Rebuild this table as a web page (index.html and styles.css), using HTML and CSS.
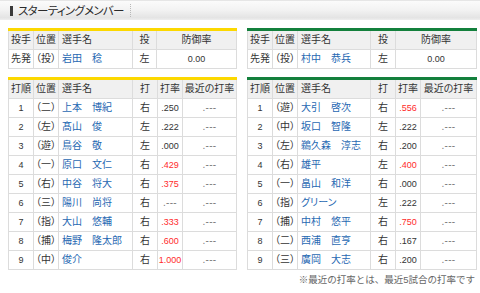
FILE: index.html
```html
<!DOCTYPE html>
<html lang="ja">
<head>
<meta charset="utf-8">
<title>スターティングメンバー</title>
<link rel="stylesheet" href="styles.css">
</head>
<body>
<div class="titlebar">
  <span class="mark"></span>
  <span class="title">スターティングメンバー</span>
  <span class="sep"></span>
</div>
<div class="teams">
  <div class="team home">
    <div class="bar"></div>
    <table class="tbl">
      <tr class="head"><th class="w25">投手</th><th class="w25">位置</th><th class="w74 l">選手名</th><th class="w24">投</th><th>防御率</th></tr>
      <tr><td>先発</td><td>（投）</td><td class="name">岩田　稔</td><td>左</td><td class="num">0.00</td></tr>
    </table>
    <div class="bar gap"></div>
    <table class="tbl">
      <tr class="head"><th class="w25">打順</th><th class="w25">位置</th><th class="w74 l">選手名</th><th class="w25">打</th><th class="w25">打率</th><th>最近の打率</th></tr>
      <tr><td class="num">1</td><td>（二）</td><td class="name">上本　博紀</td><td>右</td><td class="num">.250</td><td class="dash">.---</td></tr>
      <tr><td class="num">2</td><td>（左）</td><td class="name">髙山　俊</td><td>左</td><td class="num">.222</td><td class="dash">.---</td></tr>
      <tr><td class="num">3</td><td>（遊）</td><td class="name">鳥谷　敬</td><td>左</td><td class="num">.000</td><td class="dash">.---</td></tr>
      <tr><td class="num">4</td><td>（一）</td><td class="name">原口　文仁</td><td>右</td><td class="num red">.429</td><td class="dash">.---</td></tr>
      <tr><td class="num">5</td><td>（右）</td><td class="name">中谷　将大</td><td>右</td><td class="num red">.375</td><td class="dash">.---</td></tr>
      <tr><td class="num">6</td><td>（三）</td><td class="name">陽川　尚将</td><td>右</td><td class="dash">.---</td><td class="dash">.---</td></tr>
      <tr><td class="num">7</td><td>（指）</td><td class="name">大山　悠輔</td><td>右</td><td class="num red">.333</td><td class="dash">.---</td></tr>
      <tr><td class="num">8</td><td>（捕）</td><td class="name">梅野　隆太郎</td><td>右</td><td class="num red">.600</td><td class="dash">.---</td></tr>
      <tr><td class="num">9</td><td>（中）</td><td class="name">俊介</td><td>右</td><td class="num red">1.000</td><td class="dash">.---</td></tr>
    </table>
  </div>
  <div class="team away">
    <div class="bar"></div>
    <table class="tbl">
      <tr class="head"><th class="w25">投手</th><th class="w25">位置</th><th class="w73 l">選手名</th><th class="w25">投</th><th>防御率</th></tr>
      <tr><td>先発</td><td>（投）</td><td class="name">村中　恭兵</td><td>左</td><td class="num">0.00</td></tr>
    </table>
    <div class="bar gap"></div>
    <table class="tbl">
      <tr class="head"><th class="w25">打順</th><th class="w25">位置</th><th class="w73 l">選手名</th><th class="w25">打</th><th class="w25">打率</th><th>最近の打率</th></tr>
      <tr><td class="num">1</td><td>（遊）</td><td class="name">大引　啓次</td><td>右</td><td class="num red">.556</td><td class="dash">.---</td></tr>
      <tr><td class="num">2</td><td>（中）</td><td class="name">坂口　智隆</td><td>左</td><td class="num">.222</td><td class="dash">.---</td></tr>
      <tr><td class="num">3</td><td>（左）</td><td class="name">鵜久森　淳志</td><td>右</td><td class="num">.200</td><td class="dash">.---</td></tr>
      <tr><td class="num">4</td><td>（右）</td><td class="name">雄平</td><td>左</td><td class="num red">.400</td><td class="dash">.---</td></tr>
      <tr><td class="num">5</td><td>（一）</td><td class="name">畠山　和洋</td><td>右</td><td class="num">.000</td><td class="dash">.---</td></tr>
      <tr><td class="num">6</td><td>（指）</td><td class="name">グリーン</td><td>左</td><td class="num">.222</td><td class="dash">.---</td></tr>
      <tr><td class="num">7</td><td>（捕）</td><td class="name">中村　悠平</td><td>右</td><td class="num red">.750</td><td class="dash">.---</td></tr>
      <tr><td class="num">8</td><td>（二）</td><td class="name">西浦　直亨</td><td>右</td><td class="num">.167</td><td class="dash">.---</td></tr>
      <tr><td class="num">9</td><td>（三）</td><td class="name">廣岡　大志</td><td>右</td><td class="num">.200</td><td class="dash">.---</td></tr>
    </table>
  </div>
</div>
<p class="note">※最近の打率とは、最近5試合の打率です</p>
</body>
</html>
```

FILE: styles.css
```css
* { box-sizing: border-box; }
html, body { margin: 0; padding: 0; background: #fff; }
body {
  font-family: "Liberation Sans", "Noto Sans CJK JP", sans-serif;
  color: #333;
  width: 480px;
}
.titlebar {
  height: 20px;
  display: flex;
  align-items: center;
  background: linear-gradient(#fbfbfb 0%, #f3f3f3 45%, #e4e4e4 88%, #eeeeee 100%);
  border-top: 1px solid #e6e6e6;
}
.mark {
  width: 3px;
  height: 10px;
  background: #3a3a3a;
  margin-left: 10px;
  margin-right: 5px;
}
.title {
  font-size: 11.5px;
  line-height: 14px;
  letter-spacing: -0.7px;
  font-feature-settings: "palt";
  color: #2b2b2b;
}
.sep {
  width: 0;
  height: 13px;
  border-left: 1px dotted #b8b8b8;
  margin-left: 6px;
}
.teams {
  display: grid;
  grid-template-columns: 229px 230px;
  column-gap: 10px;
  padding-left: 8px;
  margin-top: 8px;
}
.bar { height: 3px; }
.home .bar { background: #fcd800; }
.away .bar { background: #13803c; }
.bar.gap { margin-top: 8px; }
.tbl {
  width: 100%;
  table-layout: fixed;
  border-collapse: separate;
  border-spacing: 0;
  border-left: 1px solid #dcdcdc;
  font-size: 10px;
  font-feature-settings: "palt";
}
.tbl th, .tbl td {
  height: 19px;
  padding: 0;
  line-height: 18px;
  border-right: 1px solid #dcdcdc;
  border-bottom: 1px solid #dcdcdc;
  text-align: center;
  font-weight: normal;
  white-space: nowrap;
  overflow: hidden;
}
.head th { background: #f0f0f0; color: #333; }
.tbl th.l { text-align: left; padding-left: 3px; }
.w24 { width: 24px; }
.w25 { width: 25px; }
.w73 { width: 73px; }
.w74 { width: 74px; }
.tbl td.name { text-align: left; padding-left: 3px; color: #1f68b2; }
.tbl td.num { font-size: 9px; }
.tbl td.red { color: #ff2b2b; }
.tbl td.dash { font-size: 10px; color: #7a7a7a; letter-spacing: 0.3px; }
.note {
  margin: 3px 0 0;
  padding-right: 5px;
  text-align: right;
  font-size: 9.5px;
  line-height: 14px;
  color: #666;
}
```
